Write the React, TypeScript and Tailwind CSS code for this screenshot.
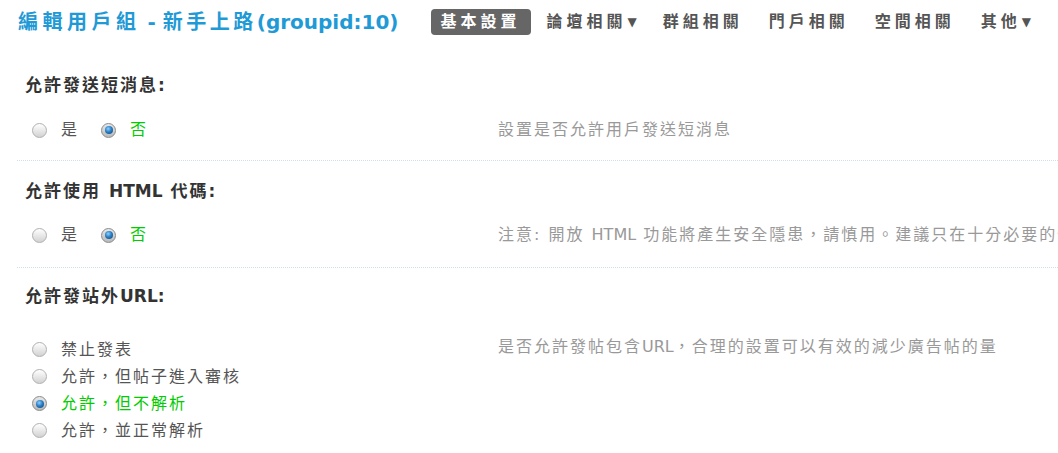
import React from "react";

const Radio = ({ checked }: { checked?: boolean }) => (
  <span
    className={
      "inline-flex h-[15px] w-[15px] shrink-0 items-center justify-center rounded-full border " +
      (checked
        ? "border-[#8a8a8a] bg-gradient-to-b from-[#e8e8e8] to-[#b9b9b9]"
        : "border-[#b0b0b0] bg-gradient-to-b from-[#ffffff] to-[#d2d2d2]")
    }
  >
    {checked && (
      <span className="h-[8px] w-[8px] rounded-full bg-[radial-gradient(circle_at_40%_35%,#8fd0ff_0%,#2a7fc4_45%,#0b3f78_100%)]" />
    )}
  </span>
);

const Option = ({ label, checked }: { label: string; checked?: boolean }) => (
  <label className="flex items-center gap-[14px]">
    <Radio checked={checked} />
    <span className={checked ? "text-[#00cc00]" : "text-[#555]"}>{label}</span>
  </label>
);

const NavItem = ({ label, active, arrow }: { label: string; active?: boolean; arrow?: boolean }) => (
  <div
    className={
      "flex h-[26px] items-center rounded-[4px] px-[10px] font-bold text-[16px] tracking-[4px] " +
      (active ? "bg-[#666666] text-white" : "text-[#555]")
    }
  >
    {label}
    {arrow && <span className="ml-[1px] text-[12px] tracking-normal">▼</span>}
  </div>
);

export default function App() {
  return (
    <div
      className="w-full overflow-hidden bg-white text-[16px] leading-[20px]"
      style={{ fontFamily: '"DejaVu Sans", "Noto Sans CJK TC", sans-serif' }}
    >
      {/* Header */}
      <div className="flex h-[44px] items-center pl-[18px]">
        <h1 className="shrink-0 whitespace-nowrap text-[20px] font-bold text-[#1f9ad6]">
          <span className="tracking-[4.5px]">編輯用戶組</span> - <span className="tracking-[3.5px]">新手上路</span>(groupid:10)
        </h1>
        <nav className="ml-[32px] flex shrink-0 items-center gap-[6px] whitespace-nowrap">
          <NavItem label="基本設置" active />
          <NavItem label="論壇相關" arrow />
          <NavItem label="群組相關" />
          <NavItem label="門戶相關" />
          <NavItem label="空間相關" />
          <NavItem label="其他" arrow />
        </nav>
      </div>

      <div className="pl-[17px] tracking-[2px]">
        {/* 短消息 */}
        <div className="border-b border-dotted border-[#cfe0ea] pt-[31px] pb-[20px]">
          <div className="pl-[8px] text-[17px] font-bold text-[#333]">允許發送短消息:</div>
          <div className="mt-[25px] flex items-center">
            <div className="flex w-[481px] shrink-0 items-center gap-[22px] pl-[15px]">
              <Option label="是" />
              <Option label="否" checked />
            </div>
            <div className="whitespace-nowrap text-[16px] text-[#999]">設置是否允許用戶發送短消息</div>
          </div>
        </div>

        {/* HTML */}
        <div className="border-b border-dotted border-[#cfe0ea] pt-[20px] pb-[22px]">
          <div className="pl-[8px] text-[17px] font-bold text-[#333]">
            允許使用 <span className="tracking-normal">HTML</span> 代碼:
          </div>
          <div className="mt-[24px] flex items-center">
            <div className="flex w-[481px] shrink-0 items-center gap-[22px] pl-[15px]">
              <Option label="是" />
              <Option label="否" checked />
            </div>
            <div className="whitespace-nowrap text-[16px] text-[#999]">
              注意: 開放 <span className="tracking-normal">HTML</span> 功能將產生安全隱患，請慎用。建議只在十分必要的情況下使用
            </div>
          </div>
        </div>

        {/* URL */}
        <div className="pt-[18px]">
          <div className="pl-[8px] text-[17px] font-bold text-[#333]">
            允許發站外<span className="tracking-normal">URL:</span>
          </div>
          <div className="mt-[30px] flex items-start">
            <div className="flex w-[481px] shrink-0 flex-col pl-[15px]">
              <div className="flex h-[27px] items-center"><Option label="禁止發表" /></div>
              <div className="flex h-[27px] items-center"><Option label="允許，但帖子進入審核" /></div>
              <div className="flex h-[27px] items-center"><Option label="允許，但不解析" checked /></div>
              <div className="flex h-[27px] items-center"><Option label="允許，並正常解析" /></div>
            </div>
            <div className="whitespace-nowrap pt-[1px] text-[16px] text-[#999]">
              是否允許發帖包含<span className="tracking-normal">URL</span>，合理的設置可以有效的減少廣告帖的量
            </div>
          </div>
        </div>
      </div>
    </div>
  );
}
